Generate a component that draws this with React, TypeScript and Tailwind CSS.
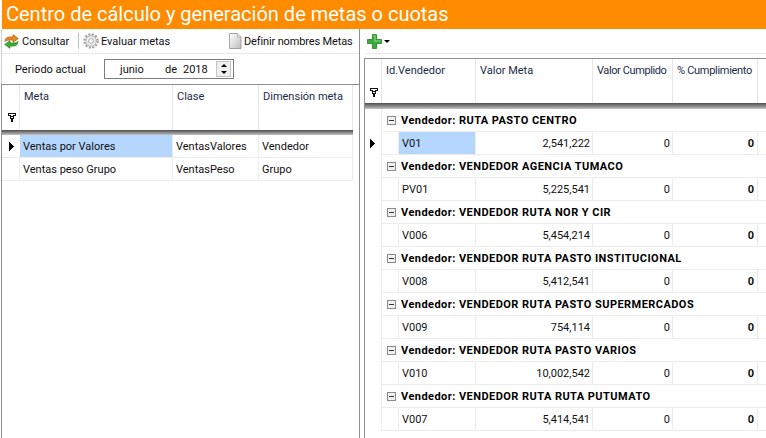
const font = '[font-family:Roboto,Tahoma,sans-serif]';

const groups = [
  { name: 'RUTA PASTO CENTRO', id: 'V01', meta: '2,541,222' },
  { name: 'VENDEDOR AGENCIA TUMACO', id: 'PV01', meta: '5,225,541' },
  { name: 'VENDEDOR RUTA NOR Y CIR', id: 'V006', meta: '5,454,214' },
  { name: 'VENDEDOR RUTA PASTO INSTITUCIONAL', id: 'V008', meta: '5,412,541' },
  { name: 'VENDEDOR RUTA PASTO SUPERMERCADOS', id: 'V009', meta: '754,114' },
  { name: 'VENDEDOR RUTA PASTO VARIOS', id: 'V010', meta: '10,002,542' },
  { name: 'VENDEDOR RUTA RUTA PUTUMATO', id: 'V007', meta: '5,414,541' },
];

const FilterIcon = () => (
  <svg width="8" height="9" viewBox="0 0 8 9" shapeRendering="crispEdges">
    <path d="M0 0h8v3H6v3H5v3H3V6H2V3H0z" fill="#111" />
    <path d="M1 1h6v1H5v1H3V2H1zM3 4h2v1H3z" fill="#fff" />
  </svg>
);

const RowArrow = () => (
  <svg width="6" height="9" viewBox="0 0 6 9" shapeRendering="crispEdges">
    <path d="M0 0h1v1h1v1h1v1h1v1h1v1H4v1H3v1H2v1H1v1H0z" fill="#000" />
  </svg>
);

const Collapse = () => (
  <div className="flex h-[9px] w-[9px] items-center justify-center border border-[#8a8a8a] bg-[#f1f1f1]">
    <div className="h-px w-[5px] bg-[#333]" />
  </div>
);

const RefreshIcon = () => (
  <svg width="15" height="15" viewBox="0 0 15 15">
    <path d="M1 7.500C1 4.500 3 3 5.500 3H9V.7L14.300 4.500 9 8.300V6H5.500C3.500 6 2 6.500 1 7.500z" fill="#ee8a22" stroke="#a8520c" strokeWidth="0.7" />
    <path d="M14 7.500c0 3-2 4.500-4.500 4.500H6v2.300L.7 10.500 6 6.700V9h3.500c2 0 3.500-.5 4.500-1.500z" fill="#3fae35" stroke="#1f7a1c" strokeWidth="0.7" />
  </svg>
);

const GearIcon = () => (
  <svg width="16" height="16" viewBox="0 0 16 16">
    <circle cx="8" cy="8" r="6.500" fill="none" stroke="#a3a3a3" strokeWidth="2.400" strokeDasharray="2 1.400" />
    <circle cx="8" cy="8" r="5.200" fill="#ececec" stroke="#b5b5b5" strokeWidth="0.800" />
    <circle cx="8" cy="8" r="2.400" fill="#fff" stroke="#9c9c9c" strokeWidth="0.800" />
  </svg>
);

const DocIcon = () => (
  <svg width="14" height="16" viewBox="0 0 14 16">
    <defs>
      <linearGradient id="doc" x1="0" y1="0" x2="1" y2="1">
        <stop offset="0" stopColor="#ffffff" />
        <stop offset="1" stopColor="#bdbdbd" />
      </linearGradient>
    </defs>
    <path d="M1.500.5h8l3.500 3.500v11.500H1.500z" fill="url(#doc)" stroke="#8f8f8f" strokeWidth="0.800" />
    <path d="M9.500.5V4H13" fill="#e8e8e8" stroke="#a0a0a0" strokeWidth="0.600" />
  </svg>
);

const PlusIcon = () => (
  <svg width="15" height="15" viewBox="0 0 15 15">
    <path d="M5.500.5h4v5h5v4h-5v5h-4v-5h-5v-4h5z" fill="#39ad3a" stroke="#1f7d2a" strokeWidth="0.800" />
    <path d="M6.500 1.500h2v5h5v1h-6v-5h-1z" fill="#8fdc7f" />
  </svg>
);

const App = () => {
  return (
    <div className={`${font} h-[438px] w-[766px] overflow-hidden bg-white text-[11px] leading-[13px] text-[#111]`}>
      <div className="ml-[2px] flex h-[29px] items-center bg-[#ff8c00] pl-1 text-[20px] text-white">
        Centro de cálculo y generación de metas o cuotas
      </div>

      <div className="flex h-[409px]">
        {/* panel izquierdo */}
        <div className="flex w-[360px] flex-col border-r border-[#8f8f8f] pl-px">
          <div className="flex h-[55px] flex-col border-l border-[#cfcfcf]">
            <div className="flex h-[25px] items-center border-b border-[#e8e8ee]">
              <div className="ml-[2px] mr-[3px]"><RefreshIcon /></div>
              <span className="w-[56px] whitespace-nowrap">Consultar</span>
              <div className="h-[16px] w-px bg-[#c0c0c0]" />
              <div className="ml-1 mr-[2px]"><GearIcon /></div>
              <span className="w-[127px] whitespace-nowrap">Evaluar metas</span>
              <div className="mr-[2px]"><DocIcon /></div>
              <span className="whitespace-nowrap tracking-[-0.14px]">Definir nombres Metas</span>
            </div>

            <div className="flex h-[30px] items-center">
              <span className="ml-[13px] w-[89px] whitespace-nowrap">Periodo actual</span>
              <div className="flex h-[20px] w-[130px] items-center border border-[#7d7d7d]">
                <span className="ml-[15px] w-[45px]">junio</span>
                <span className="w-[18px]">de</span>
                <span className="w-[33px]">2018</span>
                <div className="flex h-[16px] w-[15px] flex-col items-center justify-around border border-[#c4c4c4] bg-[#efefef]">
                  <div className="h-0 w-0 border-x-[3px] border-b-[3px] border-x-transparent border-b-black" />
                  <div className="h-0 w-0 border-x-[3px] border-t-[3px] border-x-transparent border-t-black" />
                </div>
              </div>
            </div>
          </div>

          <div className="flex-1 border-l border-t border-[#8f8f8f]">
            <div className="flex h-[45px] w-[351px] text-[#1c2a4a]">
              <div className="flex w-[18px] items-end justify-center border-r border-[#e6e6e6] pb-2 pl-[2px]"><FilterIcon /></div>
              <div className="w-[153px] border-r border-[#e6e6e6] pl-1 pt-[5px]">Meta</div>
              <div className="w-[86px] border-r border-[#e6e6e6] pl-1 pt-[5px]">Clase</div>
              <div className="w-[94px] border-r border-[#e6e6e6] pl-1 pt-[5px]">Dimensión meta</div>
            </div>
            <div className="h-[5px] w-[351px] bg-gradient-to-b from-[#4f4f4f] to-[#c4c4c4]" />
            <div className="flex h-[23px] w-[351px] items-center border-b border-[#ececec]">
              <div className="flex w-[18px] justify-center pl-[2px]"><RowArrow /></div>
              <div className="flex h-full w-[153px] items-center border-r border-[#ececec] bg-[#b5d7fd] pl-[3px]">Ventas por Valores</div>
              <div className="flex h-full w-[86px] items-center border-r border-[#ececec] pl-[3px]">VentasValores</div>
              <div className="flex h-full w-[94px] items-center border-r border-[#ececec] pl-[3px]">Vendedor</div>
            </div>
            <div className="flex h-[23px] w-[351px] items-center border-b border-[#ececec]">
              <div className="h-full w-[18px] border-r border-[#ececec]" />
              <div className="flex h-full w-[153px] items-center border-r border-[#ececec] pl-[3px]">Ventas peso Grupo</div>
              <div className="flex h-full w-[86px] items-center border-r border-[#ececec] pl-[3px]">VentasPeso</div>
              <div className="flex h-full w-[94px] items-center border-r border-[#ececec] pl-[3px]">Grupo</div>
            </div>
          </div>
        </div>

        {/* panel derecho */}
        <div className="ml-1 flex-1">
          <div className="ml-[2px] flex h-[25px] items-center border-b border-[#e8e8ee] pl-[1px]">
            <PlusIcon />
            <div className="ml-[2px] h-0 w-0 border-x-[3px] border-t-[3px] border-x-transparent border-t-black" />
          </div>
          <div className="mt-[4px] h-[380px] border-l border-t border-[#8f8f8f]">
            <div className="flex h-[44px] text-[#1c2a4a]">
              <div className="flex w-[17px] items-end justify-center border-r border-[#e6e6e6] pb-[6px] pl-[2px]"><FilterIcon /></div>
              <div className="w-[94px] border-r border-[#e6e6e6] pl-1 pt-[5px]">Id.Vendedor</div>
              <div className="w-[117px] border-r border-[#e6e6e6] pl-1 pt-[5px]">Valor Meta</div>
              <div className="w-[80px] whitespace-nowrap border-r border-[#e6e6e6] pl-1 pt-[5px] tracking-[-0.4px]">Valor Cumplido</div>
              <div className="w-[85px] whitespace-nowrap border-r border-[#e6e6e6] pl-1 pt-[5px] tracking-[-0.3px]">% Cumplimiento</div>
            </div>
            <div className="h-[6px] bg-gradient-to-b from-[#4f4f4f] to-[#c4c4c4]" />
            {groups.map((g, i) => (
              <div key={g.id} className="flex">
                <div className="flex w-[16px] shrink-0 items-end justify-center pb-[7px]">
                  {i === 0 && <RowArrow />}
                </div>
                <div className="flex-1 border-l border-[#ececec]">
                  <div className="flex h-[22px] items-center pl-[5px] font-bold tracking-[0.45px] text-black">
                    <Collapse />
                    <span className="ml-[5px] whitespace-nowrap">Vendedor: {g.name}</span>
                  </div>
                  <div className="flex h-[24px] border-y border-[#ececec]">
                    <div className="w-[16px] shrink-0" />
                    <div className={`flex w-[78px] items-center border-x border-[#ececec] pl-[3px] ${i === 0 ? 'bg-[#b5d7fd]' : ''}`}>{g.id}</div>
                    <div className="flex w-[117px] items-center justify-end border-r border-[#ececec] pr-[2px]">{g.meta}</div>
                    <div className="flex w-[80px] items-center justify-end border-r border-[#ececec] pr-[2px]">0</div>
                    <div className="flex w-[85px] items-center justify-end border-r border-[#ececec] pr-[3px] font-bold">0</div>
                  </div>
                </div>
              </div>
            ))}
          </div>
        </div>
      </div>
    </div>
  );
};

export default App;
